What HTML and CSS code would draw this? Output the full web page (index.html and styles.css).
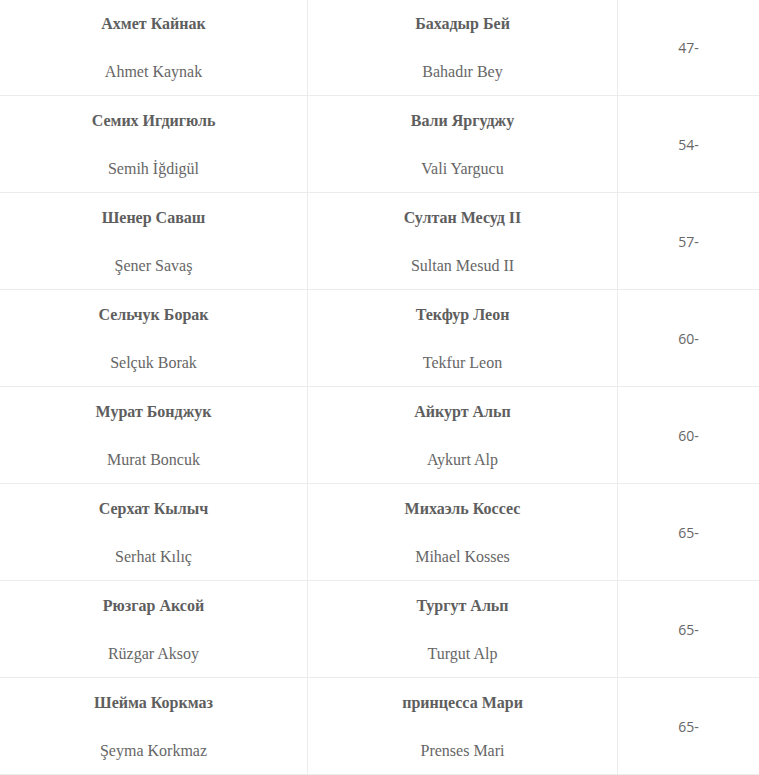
FILE: index.html
```html
<!DOCTYPE html>
<html lang="ru">
<head>
<meta charset="utf-8">
<title>Актёры</title>
<link rel="stylesheet" href="styles.css">
</head>
<body>
<table class="cast">
  <colgroup>
    <col class="c-actor">
    <col class="c-role">
    <col class="c-ep">
  </colgroup>
  <tbody>
    <tr>
      <td><p class="ru">Ахмет Кайнак</p><p class="tr">Ahmet Kaynak</p></td>
      <td><p class="ru">Бахадыр Бей</p><p class="tr">Bahadır Bey</p></td>
      <td class="ep">47-</td>
    </tr>
    <tr>
      <td><p class="ru">Семих Игдигюль</p><p class="tr">Semih İğdigül</p></td>
      <td><p class="ru">Вали Яргуджу</p><p class="tr">Vali Yargucu</p></td>
      <td class="ep">54-</td>
    </tr>
    <tr>
      <td><p class="ru">Шенер Саваш</p><p class="tr">Şener Savaş</p></td>
      <td><p class="ru">Султан Месуд II</p><p class="tr">Sultan Mesud II</p></td>
      <td class="ep">57-</td>
    </tr>
    <tr>
      <td><p class="ru">Сельчук Борак</p><p class="tr">Selçuk Borak</p></td>
      <td><p class="ru">Текфур Леон</p><p class="tr">Tekfur Leon</p></td>
      <td class="ep">60-</td>
    </tr>
    <tr>
      <td><p class="ru">Мурат Бонджук</p><p class="tr">Murat Boncuk</p></td>
      <td><p class="ru">Айкурт Альп</p><p class="tr">Aykurt Alp</p></td>
      <td class="ep">60-</td>
    </tr>
    <tr>
      <td><p class="ru">Серхат Кылыч</p><p class="tr">Serhat Kılıç</p></td>
      <td><p class="ru">Михаэль Коссес</p><p class="tr">Mihael Kosses</p></td>
      <td class="ep">65-</td>
    </tr>
    <tr>
      <td><p class="ru">Рюзгар Аксой</p><p class="tr">Rüzgar Aksoy</p></td>
      <td><p class="ru">Тургут Альп</p><p class="tr">Turgut Alp</p></td>
      <td class="ep">65-</td>
    </tr>
    <tr>
      <td><p class="ru">Шейма Коркмаз</p><p class="tr">Şeyma Korkmaz</p></td>
      <td><p class="ru">принцесса Мари</p><p class="tr">Prenses Mari</p></td>
      <td class="ep">65-</td>
    </tr>
  </tbody>
</table>
</body>
</html>
```

FILE: styles.css
```css
html, body {
  margin: 0;
  padding: 0;
  background: #ffffff;
}

body {
  overflow: hidden;
  font-family: "Liberation Serif", "Times New Roman", serif;
  font-size: 16px;
  color: #666666;
}

.cast {
  margin: -2px 0 0 -1px;
  width: 760px;
  table-layout: fixed;
  border-collapse: collapse;
}

.c-actor { width: 308px; }
.c-role { width: 310px; }
.c-ep { width: 142px; }

.cast td {
  height: 97px;
  padding: 2px 8px 0;
  border: 1px solid #ececec;
  text-align: center;
  vertical-align: middle;
  box-sizing: border-box;
}

.cast p {
  margin: 0;
  line-height: 24px;
}

.cast p + p {
  margin-top: 24px;
}

.ru {
  font-weight: bold;
  color: #5e5e5e;
}

.tr {
  color: #666666;
}

.cast td.ep {
  font-family: "Open Sans", "Liberation Sans", sans-serif;
  font-size: 14px;
  padding-top: 1px;
  color: #666666;
}
```
